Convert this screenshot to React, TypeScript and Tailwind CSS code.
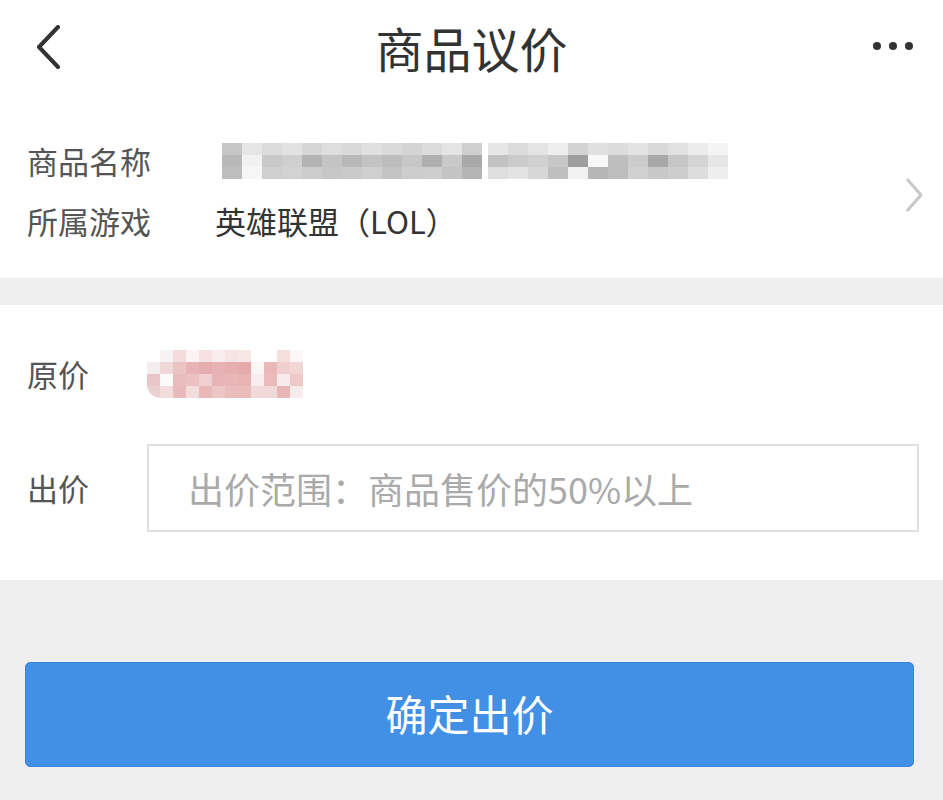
import React from "react";

const nameBlur = [
  ["#c6c6c6", "#e6e6e6", "#dcdcdc", "#e2e2e2", "#d6d6d6", "#dedede", "#d9d9d9", "#e0e0e0", "#dadada", "#d4d4d4", "#dcdcdc", "#e4e4e4", "#cfcfcf", "#e6e6e6", "#dcdcdc", "#e4e4e4", "#eeeeee", "#d3d3d3", "#e0e0e0", "#dcdcdc", "#e3e3e3", "#d9d9d9", "#e1e1e1", "#ececec", "#f4f4f4"],
  ["#b9b9b9", "#f2f2f2", "#c9c9c9", "#cfcfcf", "#b3b3b3", "#c4c4c4", "#b8b8b8", "#c3c3c3", "#bdbdbd", "#c7c7c7", "#b0b0b0", "#c9c9c9", "#a9a9a9", "#c1c1c1", "#cbcbcb", "#d0d0d0", "#c8c8c8", "#9e9e9e", "#f8f8f8", "#bebebe", "#cccccc", "#a8a8a8", "#c6c6c6", "#d4d4d4", "#e6e6e6"],
  ["#bdbdbd", "#f6f6f6", "#d0d0d0", "#d2d2d2", "#cccccc", "#c6c6c6", "#cacaca", "#cfcfcf", "#c3c3c3", "#cdcdcd", "#cecece", "#c4c4c4", "#b4b4b4", "#dedede", "#e3e3e3", "#d7d7d7", "#bfbfbf", "#f2f2f2", "#b6b6b6", "#bdbdbd", "#d1d1d1", "#c8c8c8", "#cdcdcd", "#dddddd", "#eeeeee"],
];

const priceBlur = [
  ["#ffffff", "#f8f3f3", "#f4dcdc", "#fbf4f4", "#f6e2e2", "#f8eded", "#f6e3e3", "#f7e8e8", "#ffffff", "#ffffff", "#f5dfdf", "#fbf7f7"],
  ["#f5eeee", "#f0d9d9", "#ecc4c4", "#e8b3b4", "#e6adae", "#e7b2b3", "#e6aeaf", "#e5aaab", "#faf6f6", "#eab8b9", "#f0cfcf", "#f2d6d6"],
  ["#e9c6c7", "#fdfafa", "#ebbcbd", "#ecc1c2", "#f0d0d0", "#e8b3b4", "#e8b6b6", "#e7b3b3", "#f8eeee", "#ebbbbc", "#f7ebeb", "#eccaca"],
  ["#ead0d0", "#f2dcdc", "#e9babb", "#f3dcdc", "#e9b9ba", "#edc6c7", "#ebbcbc", "#eabcbc", "#f2d9d9", "#f2d9d9", "#e8b6b7", "#f7ecec"],
];

export default function App() {
  return (
    <div
      className="w-[943px] h-[800px] bg-[#efefef] flex flex-col overflow-hidden"
      style={{ fontFamily: '"Noto Sans CJK SC", "Noto Sans", sans-serif' }}
    >
      {/* header */}
      <div className="h-[100px] bg-white flex items-center justify-between px-[34px] relative">
        <svg width="28" height="44" viewBox="0 0 28 44" className="mt-[-6px]">
          <path d="M24 2 L5 22 L24 42" fill="none" stroke="#333" strokeWidth="4" strokeLinecap="round" strokeLinejoin="round" />
        </svg>
        <div className="absolute left-0 right-0 text-center text-[48px] leading-none text-[#333] mt-[-6px]">商品议价</div>
        <div className="flex gap-[8px] mr-[-4px] mt-[-8px]">
          <span className="w-[8px] h-[8px] rounded-full bg-[#333]" />
          <span className="w-[8px] h-[8px] rounded-full bg-[#333]" />
          <span className="w-[8px] h-[8px] rounded-full bg-[#333]" />
        </div>
      </div>

      {/* product info */}
      <div className="h-[178px] bg-white flex items-center pl-[27px] pr-[19px]">
        <div className="flex-1 flex flex-col gap-[22px] mt-[4px]">
          <div className="flex items-center h-[38px]">
            <span className="w-[195px] text-[31px] text-[#555]">商品名称</span>
            <div className="flex flex-col">
              {nameBlur.map((row, i) => (
                <div key={i} className="flex">
                  {row.map((c, j) => (
                    <span key={j} className={j === 13 ? "w-[20px] h-[12px] ml-[6px]" : "w-[20px] h-[12px]"} style={{ background: c }} />
                  ))}
                </div>
              ))}
            </div>
          </div>
          <div className="flex items-center h-[38px]">
            <span className="w-[188px] text-[31px] text-[#555]">所属游戏</span>
            <span className="text-[31px] text-[#333]">英雄联盟（LOL）</span>
          </div>
        </div>
        <svg width="20" height="36" viewBox="0 0 20 36" className="mt-[12px]">
          <path d="M3 2 L17 18 L3 34" fill="none" stroke="#c8c8c8" strokeWidth="3" strokeLinejoin="round" />
        </svg>
      </div>

      <div className="h-[27px] bg-[#efefef]" />

      {/* price */}
      <div className="h-[275px] bg-white pl-[27px] pr-[24px] flex flex-col">
        <div className="flex items-center mt-[46px] h-[46px]">
          <span className="w-[120px] text-[31px] text-[#555]">原价</span>
          <div className="flex flex-col rounded-l-[14px] overflow-hidden">
            {priceBlur.map((row, i) => (
              <div key={i} className="flex">
                {row.map((c, j) => (
                  <span key={j} className="w-[13px] h-[12px]" style={{ background: c }} />
                ))}
              </div>
            ))}
          </div>
        </div>
        <div className="flex items-center mt-[47px]">
          <span className="w-[120px] text-[31px] text-[#555]">出价</span>
          <input
            placeholder="出价范围：商品售价的50%以上"
            className="flex-1 h-[88px] border-2 border-[#e0e0e0] px-[39px] text-[36px] text-[#333] placeholder:text-[#aaa] outline-none"
          />
        </div>
      </div>

      {/* submit */}
      <div className="pl-[25px] pr-[29px] pt-[82px]">
        <button className="w-full h-[105px] bg-[#4190e6] border border-[#3a85db] rounded-[5px] text-white text-[42px] leading-none pb-[4px]">
          确定出价
        </button>
      </div>
    </div>
  );
}
